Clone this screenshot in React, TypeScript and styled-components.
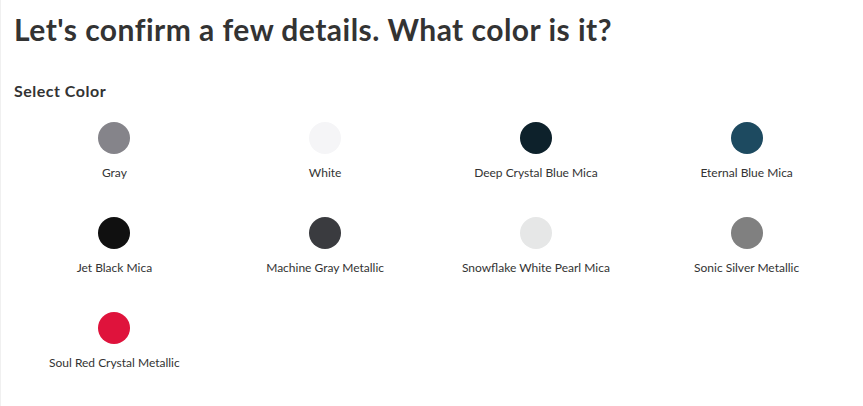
import React from "react";
import styled, { createGlobalStyle } from "styled-components";

const GlobalStyle = createGlobalStyle`
  html, body { margin: 0; padding: 0; background: #ffffff; }
  body { font-family: Lato, "Open Sans", sans-serif; color: #333333; }
`;

const Page = styled.div`
  box-sizing: border-box;
  width: 863px;
  height: 406px;
  padding: 11px 11px 0 8px;
  border-left: 1px solid #f0f0f0;
  background: #ffffff;
`;

const Heading = styled.h1`
  margin: 0 0 0 5px;
  font-size: 30px;
  line-height: 36px;
  font-weight: 700;
  letter-spacing: 0.48px;
  color: #333333;
`;

const SectionLabel = styled.h2`
  margin: 34px 0 0 5px;
  font-size: 16px;
  line-height: 20px;
  font-weight: 700;
  letter-spacing: 0.5px;
  color: #333333;
`;

const SwatchGrid = styled.div`
  display: grid;
  grid-template-columns: repeat(4, 1fr);
  row-gap: 36px;
  margin-top: 21px;
`;

const Swatch = styled.button`
  display: flex;
  flex-direction: column;
  align-items: center;
  background: none;
  border: 0;
  padding: 0;
  cursor: pointer;
  font-family: inherit;
`;

const Dot = styled.span<{ $color: string }>`
  display: block;
  width: 32px;
  height: 32px;
  border-radius: 50%;
  background: ${(p) => p.$color};
  margin-bottom: 11px;
`;

const SwatchName = styled.span`
  font-size: 12px;
  line-height: 16px;
  color: #333333;
  white-space: nowrap;
`;

const colors = [
  { name: "Gray", hex: "#85848a" },
  { name: "White", hex: "#f5f5f7" },
  { name: "Deep Crystal Blue Mica", hex: "#0d212b" },
  { name: "Eternal Blue Mica", hex: "#1d4a60" },
  { name: "Jet Black Mica", hex: "#101010" },
  { name: "Machine Gray Metallic", hex: "#3a3b3f" },
  { name: "Snowflake White Pearl Mica", hex: "#e6e7e7" },
  { name: "Sonic Silver Metallic", hex: "#808080" },
  { name: "Soul Red Crystal Metallic", hex: "#df133c" },
];

export default function App() {
  return (
    <>
      <GlobalStyle />
      <Page>
        <Heading>Let's confirm a few details. What color is it?</Heading>
        <SectionLabel>Select Color</SectionLabel>
        <SwatchGrid>
          {colors.map((c) => (
            <Swatch key={c.name} type="button">
              <Dot $color={c.hex} />
              <SwatchName>{c.name}</SwatchName>
            </Swatch>
          ))}
        </SwatchGrid>
      </Page>
    </>
  );
}
